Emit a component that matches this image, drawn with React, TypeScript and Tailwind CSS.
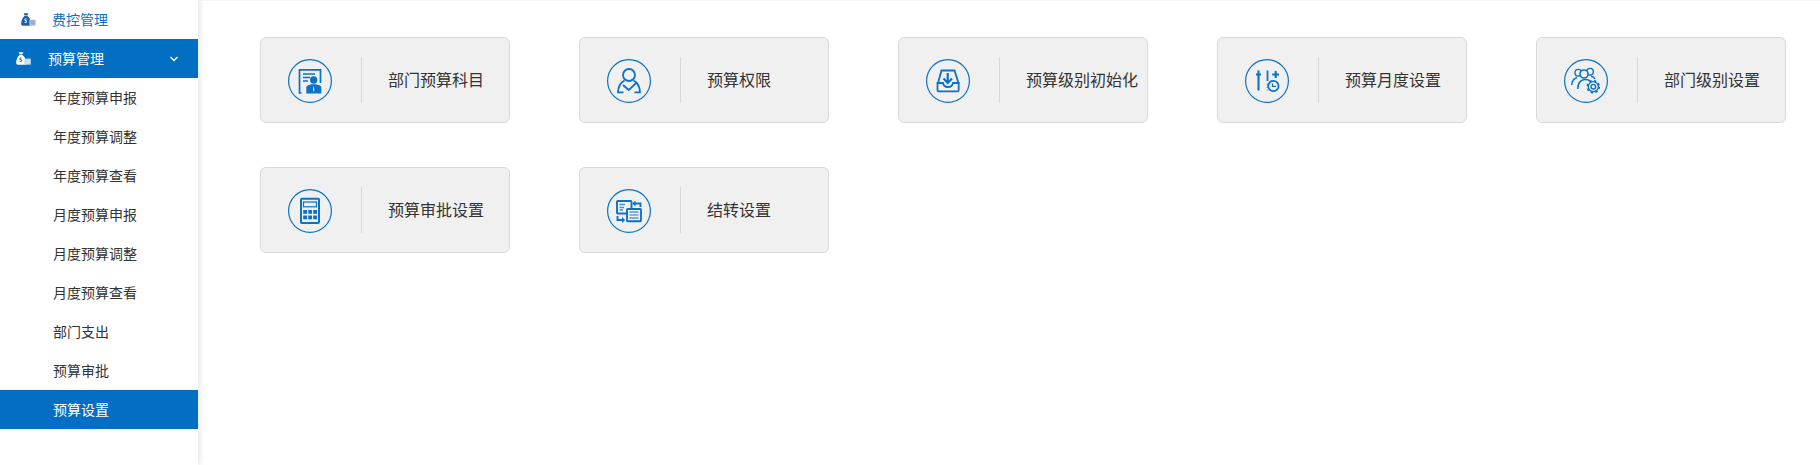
import React from 'react'

const BLUE = '#0b72c4'

// money bag with small calculator, used in the sidebar
const BagIcon = ({ color, accent, mark }: { color: string; accent: string; mark: string }) => (
	<svg width="15" height="13" viewBox="0 0 15 13">
		<path d="M2.6 0.3 H7.4 L6.3 2.6 H3.7 Z" fill={color} />
		<path d="M3.6 3.1 H6.4 C8.4 4.4 9.6 6.6 9.6 9 V12.7 H2 C0.5 12.7 0 11.7 0.2 10 C0.5 7.2 1.6 4.6 3.6 3.1 Z" fill={color} />
		<path d="M5.6 6 H3.9 V7.6 H5.4 V9.4 H3.6" fill="none" stroke={mark} strokeWidth="0.9" />
		<rect x="8.4" y="6.6" width="6.4" height="6.1" fill={accent} />
		<path d="M9.2 8.4 H14.2 M9.2 10.6 H14.2 M11 7 V12.4 M12.8 7 V12.4" stroke={color} strokeWidth="0.6" opacity="0.5" />
	</svg>
)

const CircleIcon = ({ children }: { children: React.ReactNode }) => (
	<svg className="mt-[2px]" width="44" height="44" viewBox="0 0 44 44" fill="none" stroke={BLUE} strokeWidth="1.8">
		<circle cx="22" cy="22" r="21.4" strokeWidth="1.2" />
		{children}
	</svg>
)

const DocIcon = () => (
	<CircleIcon>
		<path d="M13.5 34 H11.5 V10.8 H32.5 V24" strokeWidth="1.7" />
		<path d="M15 15 H27 M15 18.5 H22 M15 22 H20" strokeWidth="1.4" />
		<circle cx="25.7" cy="21" r="3.7" fill={BLUE} stroke="none" />
		<path d="M18.3 34.6 V28.5 C18.3 26.5 21 25.6 23.7 25.2 H27.7 C30.5 25.6 33.3 26.5 33.3 28.5 V34.6 Z" fill={BLUE} stroke="none" />
		<path d="M25.7 26.5 L25 31 L25.7 33 L26.4 31 Z" fill="#f0f0f0" stroke="none" />
	</CircleIcon>
)

const PersonIcon = () => (
	<CircleIcon>
		<circle cx="22" cy="16" r="6" />
		<path d="M17.5 21.5 C13.5 23.5 11.3 27.5 11 33.3 H16.5" />
		<path d="M26.5 21.5 C30.5 23.5 32.7 27.5 33 33.3 H27.5" />
		<path d="M16 26 L21.7 31 L30 23.3" />
	</CircleIcon>
)

const InboxIcon = () => (
	<CircleIcon>
		<path d="M12 24 L15.5 11.5 H28.5 L32.5 24" />
		<path d="M11.5 24 H17 C17.5 27 19 28 22 28 C25 28 26.5 27 27 24 H32.7 V31 C32.7 31.8 32.2 32.3 31.5 32.3 H12.7 C12 32.3 11.5 31.8 11.5 31 Z" />
		<path d="M21.7 14 V23" strokeWidth="2.2" />
		<path d="M17.5 19.5 L21.7 24 L26 19.5" strokeWidth="2.2" />
	</CircleIcon>
)

const SlidersIcon = () => (
	<CircleIcon>
		<path d="M13.5 11.5 V31.5 M11 15.5 H16" strokeWidth="2.1" />
		<path d="M22.5 11.5 V22" strokeWidth="1.8" />
		<path d="M22.5 24.5 V31.5" strokeWidth="1.6" strokeDasharray="1.5 1.5" opacity="0.6" />
		<path d="M30.7 12 V19 M27.2 15.5 H34" strokeWidth="2.1" />
		<circle cx="28.4" cy="27" r="5.2" strokeWidth="1.8" />
		<path d="M27.5 24.5 V27.4 H31" strokeWidth="1.3" />
	</CircleIcon>
)

const PeopleGearIcon = () => (
	<CircleIcon>
		<circle cx="14.3" cy="13.7" r="3.3" strokeWidth="1.4" />
		<circle cx="26" cy="12.7" r="3.3" strokeWidth="1.4" />
		<circle cx="20" cy="15" r="4" fill="#f0f0f0" strokeWidth="1.6" />
		<path d="M7.7 26 C8 22 9.8 19.5 13 18.5" strokeWidth="1.4" />
		<path d="M13.7 30 C14 24.5 16 21 20.5 20.5 C23 20.3 25 21 26.5 22" strokeWidth="1.6" />
		<path d="M27 17.3 C28.8 17.6 30.2 18.4 31 20" strokeWidth="1.4" />
		<circle cx="29.3" cy="27.7" r="2.3" strokeWidth="1.4" />
		<circle cx="29.3" cy="27.7" r="5.8" strokeWidth="2" strokeDasharray="2.3 2.25" />
		<circle cx="29.3" cy="27.7" r="5" strokeWidth="1.3" />
	</CircleIcon>
)

const CalcIcon = () => (
	<CircleIcon>
		<rect x="13" y="9.8" width="18" height="24.2" rx="1" strokeWidth="2" />
		<rect x="15.5" y="13" width="13" height="4.8" strokeWidth="1.2" />
		{[15.2, 20.2, 25.2].map(x =>
			[21, 26.5].map(y => <rect key={`${x}-${y}`} x={x} y={y} width="3.8" height="3.8" fill={BLUE} stroke="none" />)
		)}
	</CircleIcon>
)

const TransferIcon = () => (
	<CircleIcon>
		<rect x="10" y="12" width="14.5" height="12.5" rx="0.8" strokeWidth="1.9" />
		<path d="M12.5 15.5 H18 M12.5 18.5 H17 M12.5 21 H16" strokeWidth="1.3" opacity="0.75" />
		<rect x="20" y="20" width="14" height="12.3" rx="0.8" fill="#f0f0f0" strokeWidth="1.9" />
		<path d="M22.5 23 H31.5" strokeWidth="1" />
		<path d="M22.5 26 H31.5" strokeWidth="1.8" opacity="0.5" />
		<path d="M22.5 29 H31.5" strokeWidth="1" />
		<path d="M33.5 18 V14.5 H27" strokeWidth="1.9" />
		<path d="M28.5 11.6 L25.3 14.5 L28.5 17.4 Z" fill={BLUE} stroke="none" />
		<path d="M10.5 27 V31 H16" strokeWidth="1.9" />
		<path d="M15 28.1 L18.2 31 L15 33.9 Z" fill={BLUE} stroke="none" />
	</CircleIcon>
)

const cards = [
	{ label: '部门预算科目', icon: <DocIcon /> },
	{ label: '预算权限', icon: <PersonIcon /> },
	{ label: '预算级别初始化', icon: <InboxIcon /> },
	{ label: '预算月度设置', icon: <SlidersIcon /> },
	{ label: '部门级别设置', icon: <PeopleGearIcon /> },
	{ label: '预算审批设置', icon: <CalcIcon /> },
	{ label: '结转设置', icon: <TransferIcon /> },
]

const subMenu = ['年度预算申报', '年度预算调整', '年度预算查看', '月度预算申报', '月度预算调整', '月度预算查看', '部门支出', '预算审批', '预算设置']

const App = () => {
	return (
		<div className="flex h-[465px] w-[1820px] overflow-hidden bg-white font-['Noto_Sans_CJK_SC',sans-serif]">
			<aside className="relative z-10 w-[198px] shrink-0 bg-white text-[14px] shadow-[2px_0_6px_rgba(0,0,0,0.1)]">
				<div className="flex h-[39px] items-center pl-[21px] text-[#0b72c4]">
					<BagIcon color="#1d5fa8" accent="#b9cfe8" mark="#ffffff" />
					<span className="ml-[16px]">费控管理</span>
				</div>
				<div className="flex h-[39px] items-center bg-[#036fc3] pl-[16px] pr-[20px] text-white">
					<BagIcon color="#ffffff" accent="#bcd6ee" mark="#036fc3" />
					<span className="ml-[17px]">预算管理</span>
					<svg className="ml-auto" width="8" height="6" viewBox="0 0 8 6" fill="none" stroke="#ffffff" strokeWidth="1.4">
						<path d="M0.5 1 L4 4.5 L7.5 1" />
					</svg>
				</div>
				{subMenu.map(item => (
					<div
						key={item}
						className={`flex h-[39px] items-center pl-[53px] ${item === '预算设置' ? 'bg-[#036fc3] text-white' : 'text-[#333333]'}`}
					>
						{item}
					</div>
				))}
			</aside>
			<main className="flex-1 border-t border-[#f6f6f6] pl-[62px] pt-[36px]">
				<div className="flex flex-wrap gap-x-[69px] gap-y-[44px]">
					{cards.map(card => (
						<div
							key={card.label}
							className="flex h-[86px] w-[250px] items-center rounded-[6px] border border-[#d9d9d9] bg-[#f0f0f0] pl-[27px]"
						>
							{card.icon}
							<div className="ml-[29px] h-[46px] w-px bg-[#d8d8d8]" />
							<span className="ml-[26px] whitespace-nowrap pb-[3px] text-[16px] text-[#333333]">{card.label}</span>
						</div>
					))}
				</div>
			</main>
		</div>
	)
}

export default App
